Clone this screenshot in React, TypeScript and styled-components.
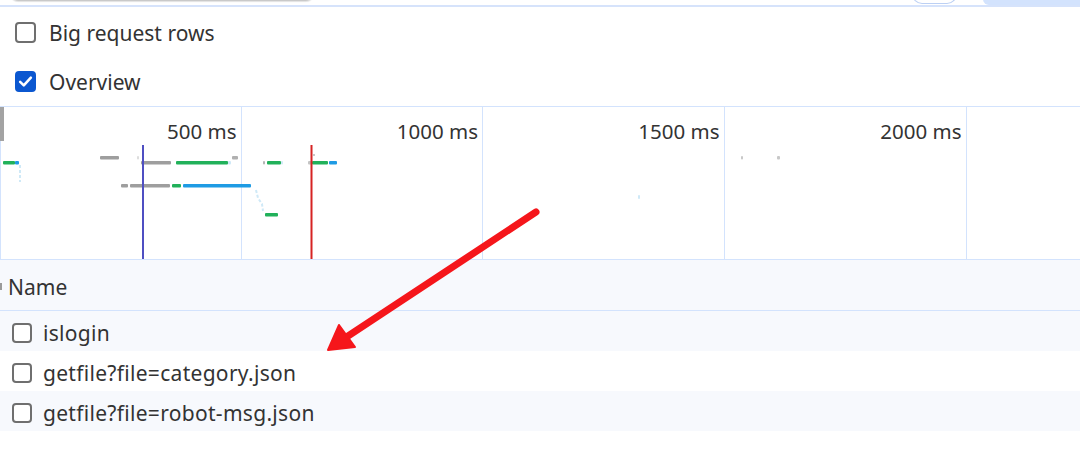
import React from "react";
import styled, { createGlobalStyle } from "styled-components";

const Global = createGlobalStyle`
  html, body { margin: 0; padding: 0; background: #ffffff; }
  body { font-family: "Noto Sans", "Open Sans", Arial, sans-serif; color: #333333; }
  * { box-sizing: border-box; }
`;

const Page = styled.div`
  position: relative;
  width: 1080px;
  height: 453px;
  overflow: hidden;
  background: #ffffff;
`;

const TopBar = styled.div`
  height: 7px;
  display: flex;
  align-items: flex-end;
  overflow: hidden;
  border-bottom: 2px solid #d6e3fb;
`;

const InputStub = styled.div`
  flex: none;
  width: 304px;
  height: 20px;
  margin-left: 10px;
  margin-bottom: 4px;
  border: 1px solid #c9c9c9;
  border-top: none;
  border-radius: 0 0 8px 8px;
  box-shadow: 0 1px 1px rgba(0, 0, 0, 0.12);
`;

const ButtonStub = styled.div`
  flex: none;
  width: 45px;
  height: 20px;
  margin-left: 598px;
  margin-bottom: 1px;
  border: 1.5px solid #bcd0f4;
  border-top: none;
  border-radius: 0 0 10px 10px;
`;

const TabFill = styled.div`
  flex: 1;
  height: 20px;
  margin-left: 26px;
  background: #d3e3fd;
  border-radius: 0 0 0 6px;
`;

const Settings = styled.div`
  padding: 1px 0 0 15px;
`;

const SettingRow = styled.label`
  height: 49px;
  display: flex;
  align-items: center;
  gap: 13px;
  font-size: 21px;
  color: #333333;
`;

const Box = styled.span<{ $checked?: boolean; $size?: number }>`
  flex: none;
  width: ${(p) => p.$size ?? 21}px;
  height: ${(p) => p.$size ?? 21}px;
  border-radius: 4px;
  border: 2px solid ${(p) => (p.$checked ? "#0b57d0" : "#6f6f6f")};
  background: ${(p) => (p.$checked ? "#0b57d0" : "#ffffff")};
  display: flex;
  align-items: center;
  justify-content: center;
`;

const Overview = styled.div`
  position: relative;
  height: 154px;
  border-top: 1px solid #d3e3fd;
  border-bottom: 1px solid #d3e3fd;
  border-left: 1px solid #d3e3fd;
  display: grid;
  grid-template-columns: 240.5px 241.5px 241.5px 242px 1fr;
`;

const Column = styled.div<{ $last?: boolean }>`
  border-right: ${(p) => (p.$last ? "none" : "1px solid #d3e3fd")};
  text-align: right;
  padding: 7px 4px 0 0;
  font-size: 20.5px;
  line-height: 34px;
  color: #333333;
`;

const Handle = styled.div`
  position: absolute;
  left: -1px;
  top: 0;
  width: 4px;
  height: 34px;
  background: #a3a3a3;
`;

const Chart = styled.svg`
  position: absolute;
  left: -1px;
  top: -107px;
  pointer-events: none;
`;

const Header = styled.div`
  height: 51px;
  padding-top: 3px;
  background: #f7f9fd;
  border-bottom: 1px solid #d3e3fd;
  display: flex;
  align-items: center;
  font-size: 21px;
  color: #333333;
`;

const EdgeMark = styled.span`
  width: 2px;
  height: 7px;
  background: #9a9a9a;
  margin-right: 6px;
`;

const Row = styled.div<{ $alt?: boolean }>`
  height: 40px;
  padding: 3px 0 0 12px;
  display: flex;
  align-items: center;
  gap: 11px;
  background: ${(p) => (p.$alt ? "#f7f9fd" : "#ffffff")};
  font-size: 21px;
  letter-spacing: 0.3px;
  color: #333333;
`;

const Overlay = styled.svg`
  position: absolute;
  left: 0;
  top: 0;
  pointer-events: none;
`;

type Bar = { x1: number; x2: number; y: number; c: string; h?: number };

const GRAY = "#9e9e9e";
const GREEN = "#21b15a";
const BLUE = "#1e9be4";
const LB = "#cfe9f7";

const bars: Bar[] = [
  { x1: 3, x2: 15, y: 161, c: GREEN },
  { x1: 15, x2: 19, y: 161, c: BLUE },
  { x1: 100, x2: 119, y: 156, c: GRAY },
  { x1: 137, x2: 139, y: 156, c: "#dddddd" },
  { x1: 141, x2: 171, y: 161, c: GRAY },
  { x1: 176, x2: 228, y: 161, c: GREEN },
  { x1: 228, x2: 231, y: 161, c: LB },
  { x1: 232, x2: 238, y: 156, c: "#b0b0b0" },
  { x1: 121, x2: 128, y: 184, c: GRAY },
  { x1: 130, x2: 170, y: 184, c: GRAY },
  { x1: 172, x2: 181, y: 184, c: GREEN },
  { x1: 183, x2: 251, y: 184, c: BLUE },
  { x1: 265, x2: 278, y: 213, c: GREEN },
  { x1: 263, x2: 265, y: 161, c: "#b5b5b5" },
  { x1: 267, x2: 281, y: 161, c: GREEN },
  { x1: 281, x2: 283, y: 161, c: LB },
  { x1: 308, x2: 312, y: 161, c: "#c4c4c4" },
  { x1: 312, x2: 328, y: 161, c: GREEN },
  { x1: 329, x2: 337, y: 161, c: BLUE },
  { x1: 313, x2: 315, y: 154, c: "#b5b5b5", h: 2 },
  { x1: 741, x2: 743, y: 156, c: "#c8c8c8" },
  { x1: 777, x2: 780, y: 156, c: "#c8c8c8" },
  { x1: 638, x2: 640, y: 195, c: LB, h: 4 },
];

function Check() {
  return (
    <svg width="15" height="15" viewBox="0 0 14 14">
      <path d="M2 7.4 L5.4 10.6 L12 3.4" fill="none" stroke="#fff" strokeWidth="2.4" strokeLinecap="round" strokeLinejoin="round" />
    </svg>
  );
}

export default function App() {
  const labels = ["500 ms", "1000 ms", "1500 ms", "2000 ms", ""];
  return (
    <Page>
      <Global />
      <TopBar>
        <InputStub />
        <ButtonStub />
        <TabFill />
      </TopBar>
      <Settings>
        <SettingRow>
          <Box />
          Big request rows
        </SettingRow>
        <SettingRow>
          <Box $checked>
            <Check />
          </Box>
          Overview
        </SettingRow>
      </Settings>
      <Overview>
        {labels.map((l, i) => (
          <Column key={i} $last={i === labels.length - 1}>
            {l}
          </Column>
        ))}
        <Handle />
        <Chart width="1080" height="453" viewBox="0 0 1080 453">
          {bars.map((b, i) => (
            <rect key={i} x={b.x1} y={b.y} width={b.x2 - b.x1} height={b.h ?? 3.5} rx="1" fill={b.c} />
          ))}
          <line x1="20" y1="165" x2="20" y2="182" stroke={LB} strokeWidth="2" strokeDasharray="3 2" />
          <polyline points="256,190 258,198 262,204 263,211" fill="none" stroke={LB} strokeWidth="2" strokeDasharray="3 2" />
          <rect x="142" y="145" width="2" height="114" fill="#4f4fc2" />
          <rect x="310.5" y="145" width="2" height="114" fill="#d62323" />
        </Chart>
      </Overview>
      <Header>
        <EdgeMark />
        Name
      </Header>
      <Row $alt>
        <Box $size={20} />
        islogin
      </Row>
      <Row>
        <Box $size={20} />
        getfile?file=category.json
      </Row>
      <Row $alt>
        <Box $size={20} />
        getfile?file=robot-msg.json
      </Row>
      <Overlay width="1080" height="453" viewBox="0 0 1080 453">
        <line x1="536" y1="212" x2="345" y2="338" stroke="#f5161b" strokeWidth="7" strokeLinecap="round" />
        <polygon points="328,350 339,325 355,347" fill="#f5161b" stroke="#f5161b" strokeWidth="2" strokeLinejoin="round" />
      </Overlay>
    </Page>
  );
}
